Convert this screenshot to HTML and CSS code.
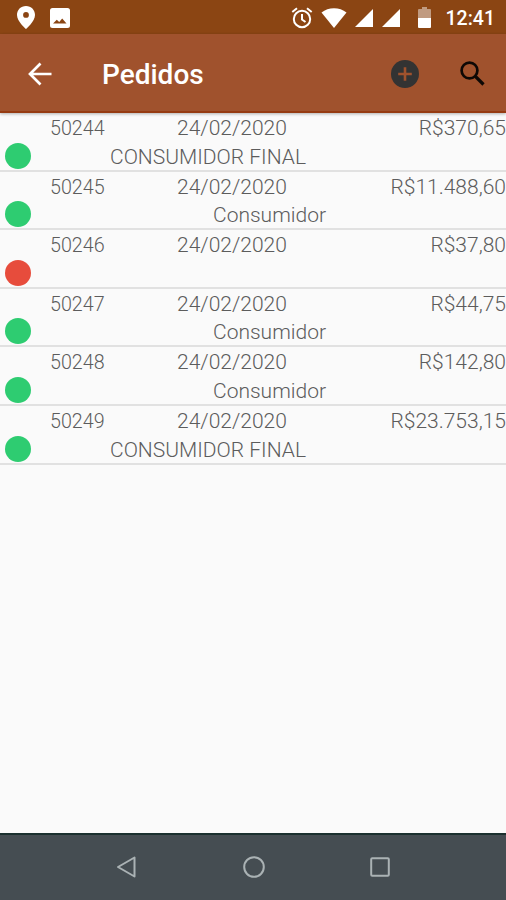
FILE: index.html
```
<!DOCTYPE html>
<html lang="pt-BR">
<head>
  <meta charset="UTF-8" />
  <meta name="viewport" content="width=device-width, initial-scale=1.0"/>
  <title>Pedidos</title>
  <link rel="stylesheet" href="styles.css">
</head>
<body>

  <div class="statusbar">
    <svg class="pin" width="20" height="26" viewBox="0 0 20 26"><path fill="#fff" fill-rule="evenodd" d="M10 1C4.800 1 1 4.900 1 10c0 6.400 9 14 9 14s9-7.600 9-14c0-5.100-3.800-9-9-9zm0 6a2.900 2.900 0 1 1 0 5.800A2.900 2.900 0 0 1 10 7z"/></svg>
    <svg class="photo" width="20" height="20" viewBox="0 0 20 20"><path fill="#fff" fill-rule="evenodd" d="M2.500 0h15A2.500 2.500 0 0 1 20 2.500v15a2.500 2.500 0 0 1-2.500 2.500h-15A2.500 2.500 0 0 1 0 17.500v-15A2.500 2.500 0 0 1 2.500 0zM3 15.500h13.500l-4.300-5-3 3.500-2.400-2.300z"/></svg>
    <div class="status-right">
      <svg class="alarm" width="22" height="22" viewBox="0 0 22 22" fill="none" stroke="#fff" stroke-width="2"><circle cx="11" cy="12" r="8.200"/><path d="M11 7v5.500l3.500 2.500M1.300 5L6 1.300M20.700 5L16 1.300"/></svg>
      <svg class="wifi" width="26" height="20" viewBox="0 0 26 20"><path fill="#fff" d="M13 20L.5 4.500C4 1.700 8.300.2 13 .2s9 1.500 12.500 4.300z"/></svg>
      <svg class="signal" width="18" height="18" viewBox="0 0 18 18"><path fill="#fff" d="M18 0v18H0z"/></svg>
      <svg class="signal" width="18" height="18" viewBox="0 0 18 18"><path fill="#fff" d="M18 0v18H0z"/></svg>
      <svg class="battery" width="13" height="21" viewBox="0 0 13 21"><path fill="#c09a80" d="M4 0h5v2h3a1 1 0 0 1 1 1v8H0V3a1 1 0 0 1 1-1h3z"/><path fill="#fff" d="M0 11h13v9a1 1 0 0 1-1 1H1a1 1 0 0 1-1-1z"/></svg>
      <span class="clock">12:41</span>
    </div>
  </div>

  <header>
    <svg class="back" width="24" height="24" viewBox="0 0 24 24" fill="none" stroke="#fff" stroke-width="2.700"><path d="M23.500 12H2.500M12.500 1.500L2 12l10.500 10.500"/></svg>
    <h1>Pedidos</h1>
    <svg class="add" width="28" height="28" viewBox="0 0 28 28"><circle cx="14" cy="14" r="14" fill="#333"/><path d="M14 7.200v13.600M7.200 14h13.600" stroke="#a0522d" stroke-width="2.600"/></svg>
    <svg class="search" width="25" height="25" viewBox="0 0 25 25" fill="none" stroke="#0d0805" stroke-width="2.700"><circle cx="9.500" cy="9.500" r="7.900"/><path d="M15.500 15.500l8 8" stroke-width="3.200"/></svg>
  </header>

  <main id="orders">
    <div class="order">
      <span class="number">50244</span>
      <span class="date">24/02/2020</span>
      <span class="total">R$370,65</span>
      <span class="dot"></span>
      <span class="client final">CONSUMIDOR FINAL</span>
    </div>
    <div class="order">
      <span class="number">50245</span>
      <span class="date">24/02/2020</span>
      <span class="total">R$11.488,60</span>
      <span class="dot"></span>
      <span class="client">Consumidor</span>
    </div>
    <div class="order">
      <span class="number">50246</span>
      <span class="date">24/02/2020</span>
      <span class="total">R$37,80</span>
      <span class="dot red"></span>
      <span class="client"></span>
    </div>
    <div class="order">
      <span class="number">50247</span>
      <span class="date">24/02/2020</span>
      <span class="total">R$44,75</span>
      <span class="dot"></span>
      <span class="client">Consumidor</span>
    </div>
    <div class="order">
      <span class="number">50248</span>
      <span class="date">24/02/2020</span>
      <span class="total">R$142,80</span>
      <span class="dot"></span>
      <span class="client">Consumidor</span>
    </div>
    <div class="order">
      <span class="number">50249</span>
      <span class="date">24/02/2020</span>
      <span class="total">R$23.753,15</span>
      <span class="dot"></span>
      <span class="client final">CONSUMIDOR FINAL</span>
    </div>
  </main>

  <nav>
    <svg width="24" height="24" viewBox="0 0 24 24"><path d="M19.500 2.500v19L3 12z"/></svg>
    <svg width="24" height="24" viewBox="0 0 24 24"><circle cx="12" cy="12" r="9.800"/></svg>
    <svg width="24" height="24" viewBox="0 0 24 24"><rect x="3.200" y="3.200" width="17.600" height="17.600" rx="1"/></svg>
  </nav>

</body>
</html>
```
FILE: styles.css
```
* {
  box-sizing: border-box;
}
body {
  font-family: Roboto, sans-serif;
  background: #fafafa;
  margin: 0;
  height: 900px;
  display: flex;
  flex-direction: column;
  overflow: hidden;
}
svg {
  display: block;
  flex: none;
}
.statusbar {
  height: 34px;
  background: #8b4513;
  display: flex;
  align-items: center;
  padding: 1px 11px 0 16px;
}
.photo {
  margin-left: 14px;
}
.status-right {
  margin-left: auto;
  display: flex;
  align-items: center;
}
.wifi {
  margin-left: 8px;
}
.signal {
  margin: 1px 0 0 9px;
}
.wifi + .signal {
  margin-left: 8px;
}
.battery {
  margin-left: 18px;
}
.clock {
  color: #fff;
  font-size: 19.5px;
  font-weight: 500;
  line-height: 24px;
  margin: 2px 0 0 15px;
}
header {
  height: 79px;
  background: #a0522d;
  border-bottom: 2px solid #963b12;
  box-shadow: 0 1px 3px rgba(0,0,0,0.3);
  display: flex;
  align-items: center;
  padding: 2px 21px 0 28px;
  position: relative;
}
header h1 {
  margin: 2px 0 0 50px;
  color: #fff;
  font-size: 28px;
  font-weight: 500;
  line-height: 34px;
}
.add {
  margin-left: auto;
}
.search {
  margin-left: 41px;
}
main {
  flex: 1;
}
.order {
  height: 58.6px;
  border-bottom: 2px solid #e1e1e1;
  display: grid;
  grid-template-columns: 50px 127px 1fr auto;
  grid-template-rows: 28.6px 28px;
  color: #5c5c5c;
  font-size: 21px;
  font-weight: 300;
  line-height: 31px;
  white-space: nowrap;
}
.number {
  grid-column: 2;
  font-size: 19.7px;
  line-height: 32px;
}
.total {
  text-align: right;
}
.dot {
  grid-column: 1;
  width: 26px;
  height: 26px;
  margin: 1px 0 0 4.5px;
  border-radius: 50%;
  background: #2ecc71;
}
.dot.red {
  background: #e74c3c;
}
.client {
  grid-column: 2 / -1;
  padding-left: 163px;
}
.client.final {
  padding-left: 60px;
}
nav {
  height: 67px;
  background: #454d52;
  border-top: 2px solid #1b302f;
  display: flex;
  justify-content: center;
  gap: 102.500px;
  padding: 20px 0 0 1px;
}
nav svg {
  fill: none;
  stroke: #aab2b4;
  stroke-width: 2;
  stroke-linejoin: round;
}
```
